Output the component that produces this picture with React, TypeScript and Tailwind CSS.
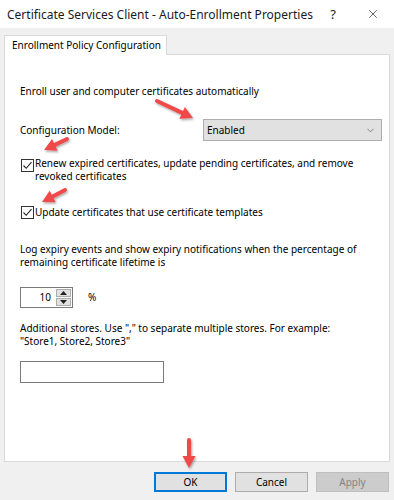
import { ChevronDown, X } from 'lucide-react'

const font = { fontFamily: '"Noto Sans", "Open Sans", sans-serif' }

function CheckBox() {
  return (
    <div className="w-[13px] h-[13px] shrink-0 border border-[#333333] bg-white flex items-center justify-center">
      <svg width="11" height="11" viewBox="0 0 11 11">
        <path d="M1.5 5.5 L4.2 8.3 L9.5 2.2" fill="none" stroke="#222222" strokeWidth="1.1" />
      </svg>
    </div>
  )
}

function Arrow({ x1, y1, x2, y2 }: { x1: number; y1: number; x2: number; y2: number }) {
  const dx = x2 - x1
  const dy = y2 - y1
  const len = Math.sqrt(dx * dx + dy * dy)
  const ux = dx / len
  const uy = dy / len
  const head = 12
  const half = 6.5
  const bx = x2 - ux * head
  const by = y2 - uy * head
  const px = -uy
  const py = ux
  return (
    <g>
      <line x1={x1} y1={y1} x2={bx} y2={by} stroke="#f0484a" strokeWidth="4" strokeLinecap="round" />
      <polygon
        points={`${x2},${y2} ${bx + px * half},${by + py * half} ${bx - px * half},${by - py * half}`}
        fill="#f0484a"
      />
    </g>
  )
}

export default function App() {
  return (
    <div className="relative w-[394px] h-[500px] bg-[#f0f0f0] text-[10px] leading-[13px] text-black overflow-hidden whitespace-nowrap" style={font}>
      {/* Title bar */}
      <div className="h-[28px] bg-white flex items-center pl-[7px]">
        <span className="text-[12px] text-[#1a1a1a]">Certificate Services Client - Auto-Enrollment Properties</span>
        <span className="ml-auto text-[13px] text-[#222] mr-[30px]">?</span>
        <X className="w-[14px] h-[14px] mr-[14px] text-[#222]" strokeWidth={1.2} />
      </div>

      {/* Tabs */}
      <div className="px-[4px] pt-[7px]">
        <div className="w-[163px] h-[20px] bg-white border border-b-0 border-[#d9d9d9] flex items-center pl-[7px] relative z-10 -mb-px">
          <span>Enrollment Policy Configuration</span>
        </div>
        <div className="h-[408px] bg-white border border-[#d9d9d9] pl-[15px] pr-[7px]">
          <div className="mt-[30px]">Enroll user and computer certificates automatically</div>

          <div className="mt-[21px] flex items-center justify-between">
            <span>Configuration Model:</span>
            <div className="w-[179px] h-[22px] bg-[#e1e1e1] border border-[#adadad] flex items-center pl-[3px] pr-[5px]">
              <span>Enabled</span>
              <ChevronDown className="ml-auto w-[11px] h-[11px] text-[#444]" strokeWidth={1.3} />
            </div>
          </div>

          <div className="mt-[16px] flex gap-[1px] pl-[1px]">
            <div className="mt-[2px]"><CheckBox /></div>
            <div>
              Renew expired certificates, update pending certificates, and remove
              <br />
              revoked certificates
            </div>
          </div>

          <div className="mt-[23px] flex gap-[1px] pl-[1px] items-center">
            <CheckBox />
            <div>Update certificates that use certificate templates</div>
          </div>

          <div className="mt-[24px]">
            Log expiry events and show expiry notifications when the percentage of
            <br />
            remaining certificate lifetime is
          </div>

          <div className="mt-[18px] flex items-center">
            <div className="w-[53px] h-[21px] border border-[#7a7a7a] bg-white flex">
              <div className="flex-1 flex items-center justify-end pr-[5px]">10</div>
              <div className="w-[16px] flex flex-col gap-px py-px pr-px">
                <div className="flex-1 bg-[#e1e1e1] border border-[#adadad] flex items-center justify-center">
                  <svg width="7" height="4" viewBox="0 0 7 4"><polygon points="3.5,0 7,4 0,4" fill="#222" /></svg>
                </div>
                <div className="flex-1 bg-[#e1e1e1] border border-[#adadad] flex items-center justify-center">
                  <svg width="7" height="4" viewBox="0 0 7 4"><polygon points="0,0 7,0 3.5,4" fill="#222" /></svg>
                </div>
              </div>
            </div>
            <span className="ml-[15px]">%</span>
          </div>

          <div className="mt-[14px]">
            Additional stores. Use "," to separate multiple stores. For example:
            <br />
            "Store1, Store2, Store3"
          </div>

          <div className="mt-[13px] w-[144px] h-[22px] border border-[#7a7a7a] bg-white" />
        </div>
      </div>

      {/* Buttons */}
      <div className="flex justify-end gap-[8px] pr-[5px] pt-[10px]">
        <button className="w-[73px] h-[20px] bg-[#e1e1e1] border-2 border-[#0078d7] flex items-center justify-center">OK</button>
        <button className="w-[73px] h-[20px] bg-[#e1e1e1] border border-[#adadad] flex items-center justify-center">Cancel</button>
        <button className="w-[73px] h-[20px] bg-[#cccccc] border border-[#bfbfbf] text-[#838383] flex items-center justify-center">Apply</button>
      </div>

      {/* Annotation arrows */}
      <svg className="absolute inset-0 pointer-events-none" width="394" height="500">
        <defs>
          <filter id="sh" x="-20%" y="-20%" width="140%" height="140%">
            <feDropShadow dx="1" dy="1.5" stdDeviation="1.2" floodColor="#000" floodOpacity="0.35" />
          </filter>
        </defs>
        <g filter="url(#sh)">
          <Arrow x1={157} y1={101} x2={193} y2={118} />
          <Arrow x1={67} y1={139} x2={44} y2={150} />
          <Arrow x1={65} y1={190} x2={42} y2={202} />
          <Arrow x1={189} y1={440} x2={189} y2={468} />
        </g>
      </svg>
    </div>
  )
}
